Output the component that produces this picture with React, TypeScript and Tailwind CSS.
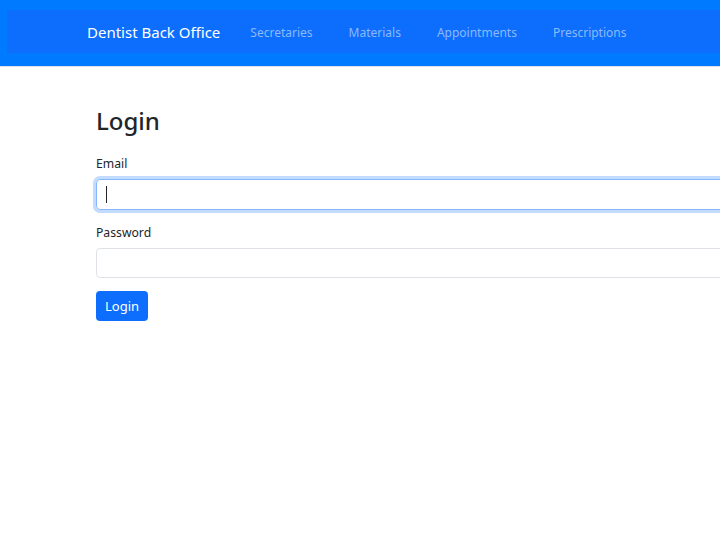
export default function App() {
  const links = ['Secretaries', 'Materials', 'Appointments', 'Prescriptions']

  return (
    <div className="w-[720px] h-[540px] overflow-hidden bg-white font-['Noto_Sans','Open_Sans',sans-serif] text-[#212529]">
      <nav className="h-[67px] bg-[#007bff] border-b border-[#dee2e6] pt-[10px] pl-[7px]">
        <div className="h-[43px] bg-[#0d6efd] flex items-center pl-[80px] w-[900px]">
          <span className="text-white text-[15px] leading-none mr-[30px] pt-[1px]">Dentist Back Office</span>
          <ul className="flex items-center gap-[36px] pt-[2px]">
            {links.map((l) => (
              <li key={l} className="text-[12px] leading-none text-[#8cb9fe]">
                {l}
              </li>
            ))}
          </ul>
        </div>
      </nav>

      <main className="pl-[96px] pt-[40px] w-[900px]">
        <h2 className="text-[24px] font-medium leading-[1.2] mb-[19px]">Login</h2>
        <form className="w-[760px]">
          <div className="mb-[14px]">
            <label htmlFor="email" className="block text-[12.2px] mb-[6px]">Email</label>
            <div className="relative">
              <input
                id="email"
                type="email"
                className="block w-full h-[31px] rounded-[4px] border border-[#86b7fe] px-[10px] outline-none shadow-[0_0_0_3px_rgba(13,110,253,0.25)]"
              />
              <span className="absolute left-[10px] top-[7px] w-px h-[17px] bg-[#212529]" />
            </div>
          </div>
          <div className="mb-[13px]">
            <label htmlFor="password" className="block text-[12.2px] mb-[6px]">Password</label>
            <input
              id="password"
              type="password"
              className="block w-full h-[30px] rounded-[4px] border border-[#dee2e6] px-[10px] outline-none"
            />
          </div>
          <button
            type="submit"
            className="h-[30px] px-[9px] rounded-[4px] bg-[#0d6efd] text-white text-[13px]"
          >
            Login
          </button>
        </form>
      </main>
    </div>
  )
}
